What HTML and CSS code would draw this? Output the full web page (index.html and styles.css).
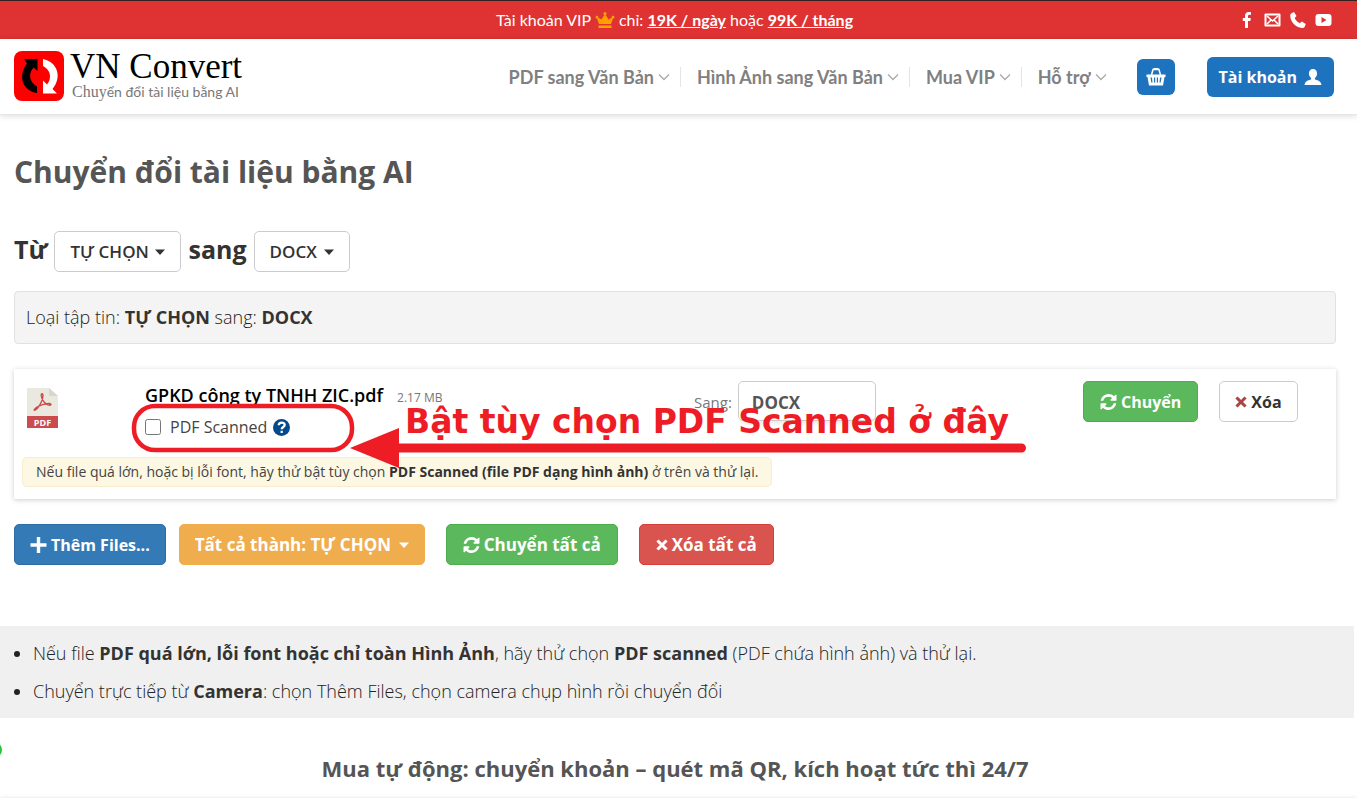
FILE: index.html
```html
<!DOCTYPE html>
<html lang="vi">
<head>
<meta charset="utf-8">
<meta name="viewport" content="width=device-width, initial-scale=1">
<title>VN Convert - Chuyển đổi tài liệu bằng AI</title>
<link rel="stylesheet" href="styles.css">
</head>
<body>
<svg class="sprite" aria-hidden="true">
  <symbol id="refresh" viewBox="0 0 1536 1536"><path d="M1511 928q0 5-1 7-64 268-268 434.500t-478 166.500q-146 0-282.500-55t-243.500-157l-129 129q-19 19-45 19t-45-19-19-45v-448q0-26 19-45t45-19h448q26 0 45 19t19 45-19 45l-137 137q71 66 161 102t187 36q134 0 250-65t186-179q11-17 53-117 8-23 30-23h192q13 0 22.500 9.500t9.500 22.500zm25-800v448q0 26-19 45t-45 19h-448q-26 0-45-19t-19-45 19-45l138-138q-148-137-349-137-134 0-250 65t-186 179q-11 17-53 117-8 23-30 23h-199q-13 0-22.500-9.500t-9.500-22.500v-7q65-268 270-434.500t480-166.500q146 0 284 55.500t245 156.500l130-129q19-19 45-19t45 19 19 45z"/></symbol>
  <symbol id="times" viewBox="0 0 12 12"><path d="M2.500 2.500l7 7M9.500 2.500l-7 7" fill="none" stroke="currentColor" stroke-width="3" stroke-linecap="square"/></symbol>
  <symbol id="chevron" viewBox="0 0 12 8"><path d="M1 1.500l5 5 5-5" fill="none" stroke="currentColor" stroke-width="1.300"/></symbol>
  <symbol id="caret" viewBox="0 0 10 6"><path d="M0 .5h10L5 6z"/></symbol>
</svg>

<div class="topbar">
  <span></span>
  <p class="promo">Tài khoản VIP
    <svg class="crown" viewBox="0 0 20 17" aria-hidden="true"><path d="M4 12L2 6.500a1.400 1.400 0 1 1 1.200-.8L6.500 7.500 9.300 3a1.500 1.500 0 1 1 1.400 0L13.500 7.500l3.300-1.800a1.400 1.400 0 1 1 1.200.8L16 12zM3.500 13.500h13V16h-13z"/></svg>
    chỉ: <a href="#ngay">19K / ngày</a> hoặc <a href="#thang">99K / tháng</a></p>
  <div class="social">
    <a href="#facebook" aria-label="Facebook"><svg viewBox="0 0 16 16"><path d="M6 16V9H3.800V6H6V4c0-2.600 1.500-4 3.800-4 1 0 1.900.1 2.200.2v2.600h-1.500C9.300 2.800 9 3.400 9 4.200V6h2.800l-.4 3H9v7z"/></svg></a>
    <a href="#mail" aria-label="Email"><svg class="wide" viewBox="0 0 17 14"><path fill-rule="evenodd" d="M1.500.500h14a1 1 0 0 1 1 1v11a1 1 0 0 1-1 1h-14a1 1 0 0 1-1-1v-11a1 1 0 0 1 1-1zM2.500 2.500v9h12v-9z"/><path d="M3 3l5.500 5L14 3M3 11l4-4M14 11l-4-4" fill="none" stroke="currentColor" stroke-width="1.600"/></svg></a>
    <a href="#phone" aria-label="Điện thoại"><svg viewBox="0 0 16 16"><path d="M1.500 1.200L4 0l2.500 4-1.800 2c1 2.300 2.800 4.200 5.100 5.300l2-1.800 4 2.500-1 2.500C14.400 15.500 13.500 16 12 16 5.500 15.500.5 10 .2 3.800c0-1.200.5-2.100 1.300-2.600z"/></svg></a>
    <a href="#youtube" aria-label="YouTube"><svg class="wide" viewBox="0 0 17 13"><path fill-rule="evenodd" d="M3.500.500h10a3 3 0 0 1 3 3v6a3 3 0 0 1-3 3h-10a3 3 0 0 1-3-3v-6a3 3 0 0 1 3-3zM6.500 3.500v6L11.500 6.500z"/></svg></a>
  </div>
</div>

<header class="header">
  <a class="brand" href="#home">
    <svg class="logo" viewBox="0 0 50 50" aria-hidden="true"><rect width="50" height="50" rx="8" fill="#fe0000"/>
      <path d="M10 8h13.500v12l-4-3.500c-5 5.500-5 14 3.500 19V42C7.500 39.500 4 24 13 12.500z" fill="#000"/>
      <path d="M29 8c14.500 3 19.500 18 9.500 30l4.500 4.500H29v-13l4 4c5-6 4-14.500-4-18.500z" fill="#fff"/></svg>
    <span class="brand-text"><span class="brand-name">VN Convert</span><span class="tagline"><span class="serif">Chuy</span>ển đổi tài liệu bằng AI</span></span>
  </a>
  <nav class="nav">
    <a href="#pdf">PDF sang Văn Bản<svg><use href="#chevron"/></svg></a>
    <a href="#hinh-anh">Hình Ảnh sang Văn Bản<svg><use href="#chevron"/></svg></a>
    <a href="#vip">Mua VIP<svg><use href="#chevron"/></svg></a>
    <a href="#ho-tro">Hỗ trợ<svg><use href="#chevron"/></svg></a>
  </nav>
  <a class="cart" href="#cart" aria-label="Giỏ hàng"><svg viewBox="0 0 20 18"><path d="M5.500 7L7 1.500h6L14.500 7" fill="none" stroke="currentColor" stroke-width="1.500"/><path d="M7.500 0h5v2h-5z"/><path fill-rule="evenodd" d="M.5 6.500h19V9h-1l-1.500 8.500H3L1.500 9h-1zM4.500 9.500l.8 5h1.200l-.5-5zM8 9.500v5h1.200v-5zM10.800 9.500v5H12v-5zM14 9.500l-.5 5h1.200l.8-5z"/></svg></a>
  <a class="account" href="#account">Tài khoản <svg viewBox="0 0 18 17"><path d="M9 0c2.800 0 4.300 2 4.300 4.700 0 2-1 3.900-2.300 5v1.500c3.500.8 6.500 2 7 5.800H0c.500-3.800 3.500-5 7-5.800V9.700c-1.300-1.100-2.300-3-2.300-5C4.700 2 6.200 0 9 0z"/></svg></a>
</header>

<main>
  <div class="container">
    <h1>Chuyển đổi tài liệu bằng AI</h1>
    <div class="formats">
      <label for="from">Từ</label>
      <span class="picker"><select id="from"><option>TỰ CHỌN</option></select><svg><use href="#caret"/></svg></span>
      <label for="to">sang</label>
      <span class="picker"><select id="to"><option>DOCX</option></select><svg><use href="#caret"/></svg></span>
    </div>
    <p class="summary">Loại tập tin: <b>TỰ CHỌN</b> sang: <b>DOCX</b></p>

    <section class="file">
      <div class="file-row">
        <svg class="pdf" viewBox="0 0 31 40" role="img" aria-label="PDF"><path d="M0 0h22l9 8v20H0z" fill="#e9e9e0"/><path d="M22 0l9 8h-9z" fill="#d9d7ca"/><path d="M0 28h31v12H0z" fill="#cc4b4c"/><path d="M8 22c3-1 8-9 8-14.500 0-2.500-2-2-1.800 0 .5 5 5 9.500 8.300 9.800 2.500 0 1.500-2-1-1.800-4 .3-8 1.500-11.500 3.500-3 2-3.500 3.800-2 3z" fill="none" stroke="#cc4b4c" stroke-width="1.400"/><text x="15.500" y="37.500" class="pdf-label" text-anchor="middle">PDF</text></svg>
        <div class="file-info">
          <div><b class="file-name">GPKD công ty TNHH ZIC.pdf</b><span class="file-size">2.17 MB</span></div>
          <div class="scan"><input type="checkbox" id="scanned"><label for="scanned">PDF Scanned</label>
            <svg class="help" viewBox="0 0 17 17" aria-hidden="true"><circle cx="8.500" cy="8.500" r="8.500" fill="#004a8d"/><path d="M5.700 6.300c.2-3.700 6-3.400 6-.3 0 2-3 2-3 4.200M8.700 11.700v2.300" fill="none" stroke="#fff" stroke-width="2.300"/></svg></div>
        </div>
        <div class="target"><label for="target">Sang:</label><select id="target"><option>DOCX</option></select></div>
        <div class="file-actions">
          <button class="btn green" type="button"><svg><use href="#refresh"/></svg>Chuyển</button>
          <button class="btn plain" type="button"><svg class="small red-icon"><use href="#times"/></svg>Xóa</button>
        </div>
      </div>
      <p class="note">Nếu file quá lớn, hoặc bị lỗi font, hãy thử bật tùy chọn <b>PDF Scanned (file PDF dạng hình ảnh)</b> ở trên và thử lại.</p>
      <div class="callout">
        <svg viewBox="0 0 900 70" aria-hidden="true"><rect x="3" y="4" width="218" height="44" rx="21" fill="none" stroke="#ee1c25" stroke-width="4.500"/><path d="M219 46l49-20v15.500h622.500a4.500 4.500 0 0 1 0 9H268V66z" fill="#ee1c25"/></svg>
        <strong>Bật tùy chọn PDF Scanned ở đây</strong>
      </div>
    </section>

    <div class="bulk">
      <button class="btn blue" type="button"><svg viewBox="0 0 15 15"><path d="M7.500 0v15M0 7.500h15" fill="none" stroke="currentColor" stroke-width="3.200"/></svg>Thêm Files...</button>
      <span class="picker amber"><select aria-label="Tất cả thành"><option>Tất cả thành: TỰ CHỌN</option></select><svg><use href="#caret"/></svg></span>
      <button class="btn green" type="button"><svg><use href="#refresh"/></svg>Chuyển tất cả</button>
      <button class="btn red" type="button"><svg class="small"><use href="#times"/></svg>Xóa tất cả</button>
    </div>
  </div>

  <ul class="tips">
    <li>Nếu file <b>PDF quá lớn, lỗi font hoặc chỉ toàn Hình Ảnh</b>, hãy thử chọn <b>PDF scanned</b> (PDF chứa hình ảnh) và thử lại.</li>
    <li>Chuyển trực tiếp từ <b>Camera</b>: chọn Thêm Files, chọn camera chụp hình rồi chuyển đổi</li>
  </ul>
  <h2>Mua tự động: chuyển khoản – quét mã QR, kích hoạt tức thì 24/7</h2>
  <div class="pricing"></div>
</main>
<span class="chat-dot"></span>
</body>
</html>
```
FILE: styles.css
```css
* { box-sizing: border-box; }
html, body { height: 100%; }
body {
  margin: 0;
  overflow: hidden;
  background: #fff;
  color: #444;
  font-family: "Open Sans", "Noto Sans", sans-serif;
  font-size: 17px;
}
a { color: inherit; text-decoration: none; }
p, h1, h2, ul { margin: 0; }
svg { fill: currentColor; flex: none; }
b { font-weight: 700; color: #333; }
.sprite { position: absolute; width: 0; height: 0; }

.topbar {
  display: grid;
  grid-template-columns: 1fr auto 1fr;
  align-items: center;
  height: 39px;
  padding: 0 25px 1px 17px;
  border-top: 1px solid #33201f;
  background: #df3333;
  color: #fff;
  font-family: Lato, sans-serif;
}
.promo { font-size: 16px; }
.promo a { font-weight: 700; text-decoration: underline; }
.crown { width: 20px; height: 17px; color: #ff9f00; vertical-align: -3px; }
.social { display: flex; justify-content: flex-end; align-items: center; gap: 9px; }
.social a { display: flex; }
.social svg { width: 16px; height: 16px; }
.social .wide { width: 17px; height: 14px; }

.header {
  display: flex;
  align-items: center;
  height: 76px;
  padding: 0 23px 0 14px;
  border-bottom: 1px solid #e6e6e6;
  box-shadow: 0 1px 6px rgba(0, 0, 0, .15);
}
.brand { display: flex; gap: 6px; margin-right: auto; }
.logo { width: 50px; height: 50px; }
.brand-text { display: flex; flex-direction: column; }
.brand-name { color: #000; font: 35px/31px "Liberation Serif", serif; }
.tagline { padding-left: 2px; color: #777; font: 14px/20px Lato, sans-serif; white-space: nowrap; }
.serif { font-family: "Liberation Serif", serif; font-size: 16px; }
.nav { display: flex; color: #808080; font: 700 18px/20px Lato, sans-serif; }
.nav a { display: flex; align-items: center; gap: 4px; padding-right: 10px; }
.nav a + a { padding-left: 16px; border-left: 1px solid #e5e5e5; }
.nav svg { width: 12px; height: 8px; color: #aaa; }
.cart, .account {
  display: flex;
  align-items: center;
  justify-content: center;
  border-radius: 6px;
  background: #1e73be;
  color: #fff;
}
.cart { width: 38px; height: 36px; margin: 0 32px 0 20px; }
.cart svg { width: 20px; height: 18px; }
.account { gap: 7px; height: 40px; padding: 0 12px; font-size: 16px; font-weight: 700; }
.account svg { width: 18px; height: 16px; }

.container { padding: 36px 21px 0 14px; }
h1 { color: #555; font-size: 30px; line-height: 42px; }
.formats { display: flex; align-items: center; gap: 7px; margin-top: 38px; color: #333; }
.formats > label { font-size: 25px; font-weight: 700; line-height: 34px; padding-bottom: 6px; }
.picker { display: grid; align-items: center; }
.picker select, .picker svg { grid-area: 1 / 1; }
.picker svg { width: 10px; height: 6px; margin-right: 16px; justify-self: end; pointer-events: none; }
select { appearance: none; margin: 0; font: inherit; color: inherit; }
.picker select {
  height: 41px;
  padding: 0 31px 0 15px;
  border: 1px solid #ccc;
  border-radius: 5px;
  background: #fff;
  font-size: 17px;
  font-weight: 600;
}
.summary {
  margin-top: 19px;
  padding: 13px 11px;
  border: 1px solid #e1e1e1;
  border-radius: 4px;
  background: #f4f4f4;
  color: #222;
  font-size: 18px;
  font-weight: 300;
  line-height: 25px;
}

.file {
  position: relative;
  height: 130px;
  margin-top: 25px;
  box-shadow: 0 1px 5px rgba(0, 0, 0, .2);
}
.file-row { display: grid; grid-template-columns: 131fr 549fr 389fr 253fr; padding-top: 12px; height: 88px; }
.pdf { width: 31px; height: 40px; margin: 7px 0 0 13px; }
.pdf-label { fill: #fff; font: 700 9px "Open Sans", sans-serif; }
.file-info { line-height: 28px; }
.file-name { color: #000; font-size: 18px; font-weight: 600; }
.file-size { margin-left: 14px; color: #777; font-size: 12px; }
.scan { display: flex; align-items: center; gap: 6px; margin-top: 1px; font-size: 16px; }
.scan input { width: 16px; height: 16px; margin: 0 3px 0 0; }
.help { width: 17px; height: 17px; }
.target { display: flex; gap: 6px; color: #777; font-size: 15px; line-height: 42px; }
.target select {
  width: 138px;
  height: 40px;
  padding: 0 13px 4px;
  border: 1px solid #ccc;
  border-radius: 5px;
  background: #fff;
  box-shadow: 0 6px 5px -4px rgba(0, 0, 0, .1);
  color: #555;
  font-size: 17px;
  font-weight: 700;
}
.file-actions { display: flex; align-items: flex-start; gap: 21px; }
.btn {
  display: inline-flex;
  align-items: center;
  gap: 4px;
  height: 41px;
  padding: 0 15px;
  border: 1px solid transparent;
  border-radius: 5px;
  color: #fff;
  font: 700 17px "Open Sans", sans-serif;
  white-space: nowrap;
}
.btn svg { width: 17px; height: 16px; }
.btn .small { width: 12px; height: 12px; }
.green { background: #5cb85c; border-color: #4cae4c; }
.file-actions .btn { padding: 0 16px; font-size: 16px; }
.file-actions .plain { padding: 0 15px; }
.plain { background: #fff; border-color: #ccc; color: #333; }
.red-icon { color: #a94442; }
.blue { background: #337ab7; border-color: #2e6da4; }
.bulk .blue { font-size: 16px; }
.red { background: #d9534f; border-color: #d43f3a; }
.note {
  width: fit-content;
  margin-left: 8px;
  padding: 0 13px;
  border: 1px solid #faebcc;
  border-radius: 5px;
  background: #fcf8e3;
  font-size: 14px;
  line-height: 28px;
}
.callout { position: absolute; left: 117px; top: 33px; width: 900px; color: #ee1c25; pointer-events: none; }
.callout svg { display: block; width: 900px; height: 70px; }
.callout strong { position: absolute; left: 274px; top: 0; font: 700 33px/40px "DejaVu Sans", sans-serif; white-space: nowrap; }

.bulk { display: flex; align-items: center; gap: 21px; margin-top: 25px; }
.bulk .blue { margin-right: -8px; }
.bulk .green, .bulk .red { padding: 0 16px; }
.amber { color: #fff; }
.amber select { border-color: #f0ad4e; background: #f0ad4e; font-weight: 700; padding-right: 32px; }

.tips {
  margin: 61px 3px 0 0;
  padding: 8px 0 8px 33px;
  background: #f0f0f0;
  color: #222;
  font-size: 18px;
  font-weight: 300;
  line-height: 38px;
}
h2 { margin: 34px 7px 0 0; color: #555; font-size: 22px; line-height: 32px; text-align: center; }
.pricing { height: 40px; margin: 14px 0 0; box-shadow: 0 0 4px rgba(0, 0, 0, .12); }
.chat-dot { position: fixed; left: -14px; bottom: 42px; width: 16px; height: 16px; border-radius: 8px; background: #2cc33c; }
```
